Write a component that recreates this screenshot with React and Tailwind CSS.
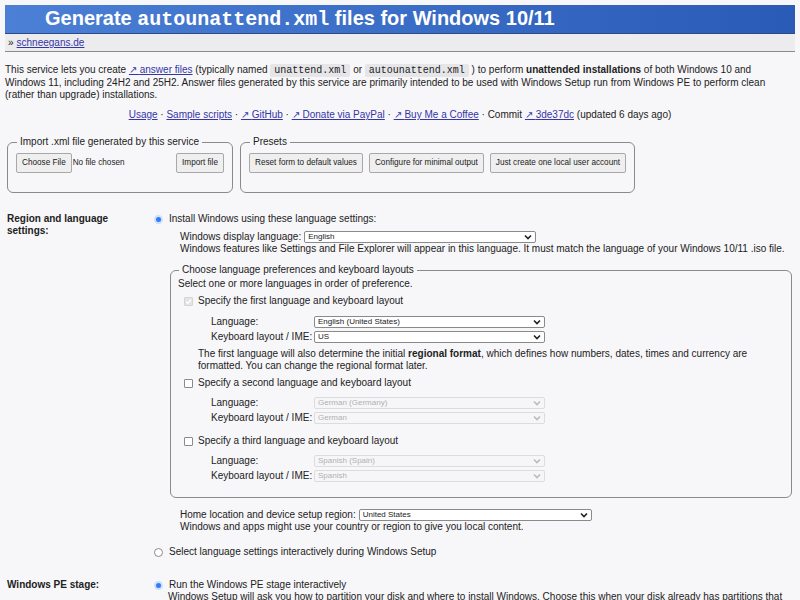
import React from 'react';

const Chevron = ({ disabled }) => (
  <svg width="8" height="6" viewBox="0 0 8 6" className="absolute right-[4px] top-1/2 -translate-y-1/2 pointer-events-none">
    <path d="M1 1.5 L4 4.5 L7 1.5" fill="none" stroke={disabled ? '#bbb' : '#222'} strokeWidth="1.6" />
  </svg>
);

function Select({ value, width, disabled }) {
  return (
    <span className="relative inline-block align-middle" style={{ width }}>
      <select
        disabled={disabled}
        defaultValue={value}
        className={`appearance-none block w-full h-[12px] text-[8px] leading-[10px] pl-[3px] rounded-[2px] border outline-none ${
          disabled ? 'border-[#dcdcdc] bg-[#f6f6f8] text-[#b0b0b0]' : 'border-[#8a8a8a] bg-white text-[#222]'
        }`}
      >
        <option>{value}</option>
      </select>
      <Chevron disabled={disabled} />
    </span>
  );
}

function Radio({ checked }) {
  return checked ? (
    <span className="inline-block w-[9px] h-[9px] rounded-full bg-[#2f7cf6] border-[2px] border-[#cfe0fb] shrink-0" />
  ) : (
    <span className="inline-block w-[9px] h-[9px] rounded-full bg-white border border-[#8a8a8a] shrink-0" />
  );
}

function Checkbox({ checked, disabled }) {
  return (
    <span
      className={`inline-flex items-center justify-center w-[9px] h-[9px] rounded-[1px] border shrink-0 ${
        disabled ? 'border-[#d4d4d4] bg-[#e4e4e4]' : 'border-[#8a8a8a] bg-white'
      }`}
    >
      {checked && (
        <svg width="7" height="7" viewBox="0 0 7 7">
          <path d="M1 3.6 L2.8 5.3 L6 1.6" fill="none" stroke="#fff" strokeWidth="1.3" />
        </svg>
      )}
    </span>
  );
}

const Btn = ({ children }) => (
  <button className="h-[20px] px-[5px] text-[8.2px] text-[#222] bg-[#efefef] border border-[#a8a8a8] rounded-[2px] whitespace-nowrap">
    {children}
  </button>
);

const Code = ({ children }) => (
  <code className="font-['Liberation_Mono',monospace] text-[10px] bg-[#e6e6e8] px-[4px] py-[1px] rounded-[2px]">{children}</code>
);

const A = ({ children, arrow }) => (
  <a href="#" className="text-[#3535a8] underline">
    {arrow && '↗ '}
    {children}
  </a>
);

function LangPair({ lang, kb, disabled }) {
  return (
    <div className="grid grid-cols-[103px_auto] gap-y-[3px] pl-[33px] items-center">
      <span className="whitespace-nowrap">Language:</span>
      <Select value={lang} width={231} disabled={disabled} />
      <span className="whitespace-nowrap">Keyboard layout / IME:</span>
      <Select value={kb} width={231} disabled={disabled} />
    </div>
  );
}

export default function App() {
  return (
    <div className="min-h-[600px] bg-[#f7f7f9] text-[#222] text-[10px] leading-[12px] font-['Liberation_Sans',Arial,sans-serif] p-[5px]">
      <div className="h-[29px] bg-gradient-to-r from-[#4b80d6] to-[#2a5bb7] flex items-center pl-[40px] border-b border-[#2a4a8a]">
        <h1 className="text-white font-bold text-[20px] leading-[22px]">
          Generate <span className="font-['Liberation_Mono',monospace]">autounattend.xml</span> files for Windows 10/11
        </h1>
      </div>
      <div className="h-[18px] bg-[#ececee] border-b border-[#8a8a8a] flex items-center pl-[3px]">
        » <span className="ml-[3px]"><A>schneegans.de</A></span>
      </div>

      <p className="mt-[12px] pr-[20px]">
        This service lets you create <A arrow>answer files</A> (typically named <Code>unattend.xml</Code> or{' '}
        <Code>autounattend.xml</Code> ) to perform <b>unattended installations</b> of both Windows 10 and Windows 11,
        including 24H2 and 25H2. Answer files generated by this service are primarily intended to be used with Windows
        Setup run from Windows PE to perform clean (rather than upgrade) installations.
      </p>

      <p className="mt-[8px] text-center">
        <A>Usage</A> · <A>Sample scripts</A> · <A arrow>GitHub</A> · <A arrow>Donate via PayPal</A> ·{' '}
        <A arrow>Buy Me a Coffee</A> · Commit <A arrow>3de37dc</A> (updated 6 days ago)
      </p>

      <div className="flex gap-[7px] mt-[15px] ml-[2px]">
        <fieldset className="w-[226px] h-[57px] border border-[#8a8a8a] rounded-[6px] px-[8px]">
          <legend className="px-[3px] ml-[1px]">Import .xml file generated by this service</legend>
          <div className="flex items-center justify-between mt-[5px]">
            <div className="flex items-center gap-[1px] text-[8.2px]">
              <Btn>Choose File</Btn>
              <span>No file chosen</span>
            </div>
            <Btn>Import file</Btn>
          </div>
        </fieldset>
        <fieldset className="w-[392px] h-[57px] border border-[#8a8a8a] rounded-[6px] px-[8px]">
          <legend className="px-[3px] ml-[1px]">Presets</legend>
          <div className="flex items-center gap-[6px] mt-[5px]">
            <Btn>Reset form to default values</Btn>
            <Btn>Configure for minimal output</Btn>
            <Btn>Just create one local user account</Btn>
          </div>
        </fieldset>
      </div>

      <div className="grid grid-cols-[146px_1fr] mt-[20px] ml-[2px]">
        <div className="font-bold pr-[30px]">Region and language settings:</div>
        <div>
          <div className="flex items-center gap-[6px] pl-[1px]">
            <Radio checked />
            <span>Install Windows using these language settings:</span>
          </div>
          <div className="pl-[27px] mt-[6px]">
            <div className="flex items-center gap-[3px]">
              <span>Windows display language:</span>
              <Select value="English" width={232} />
            </div>
            <div>Windows features like Settings and File Explorer will appear in this language. It must match the language of your Windows 10/11 .iso file.</div>
          </div>

          <fieldset className="ml-[17px] mr-[3px] mt-[9px] border border-[#8a8a8a] rounded-[6px] px-[7px] pb-[15px]">
            <legend className="px-[3px] ml-[1px]">Choose language preferences and keyboard layouts</legend>
            <div className="mt-[2px]">Select one or more languages in order of preference.</div>
            <div className="flex items-center gap-[5px] mt-[5px] pl-[6px]">
              <Checkbox checked disabled />
              <span>Specify the first language and keyboard layout</span>
            </div>
            <div className="mt-[9px]">
              <LangPair lang="English (United States)" kb="US" />
            </div>
            <p className="pl-[20px] mt-[5px] pr-[20px]">
              The first language will also determine the initial <b>regional format</b>, which defines how numbers, dates,
              times and currency are formatted. You can change the regional format later.
            </p>
            <div className="flex items-center gap-[5px] mt-[5px] pl-[6px]">
              <Checkbox />
              <span>Specify a second language and keyboard layout</span>
            </div>
            <div className="mt-[8px]">
              <LangPair lang="German (Germany)" kb="German" disabled />
            </div>
            <div className="flex items-center gap-[5px] mt-[11px] pl-[6px]">
              <Checkbox />
              <span>Specify a third language and keyboard layout</span>
            </div>
            <div className="mt-[8px]">
              <LangPair lang="Spanish (Spain)" kb="Spanish" disabled />
            </div>
          </fieldset>

          <div className="pl-[27px] mt-[11px]">
            <div className="flex items-center gap-[3px]">
              <span>Home location and device setup region:</span>
              <Select value="United States" width={233} />
            </div>
            <div>Windows and apps might use your country or region to give you local content.</div>
          </div>

          <div className="flex items-center gap-[6px] pl-[1px] mt-[13px]">
            <Radio />
            <span>Select language settings interactively during Windows Setup</span>
          </div>
        </div>
      </div>

      <div className="grid grid-cols-[146px_1fr] mt-[21px] ml-[2px]">
        <div className="font-bold">Windows PE stage:</div>
        <div>
          <div className="flex items-center gap-[6px] pl-[1px]">
            <Radio checked />
            <span>Run the Windows PE stage interactively</span>
          </div>
          <div className="pl-[15px]">
            Windows Setup will ask you how to partition your disk and where to install Windows. Choose this when your disk
            already has partitions that you want to keep.
          </div>
        </div>
      </div>
    </div>
  );
}
